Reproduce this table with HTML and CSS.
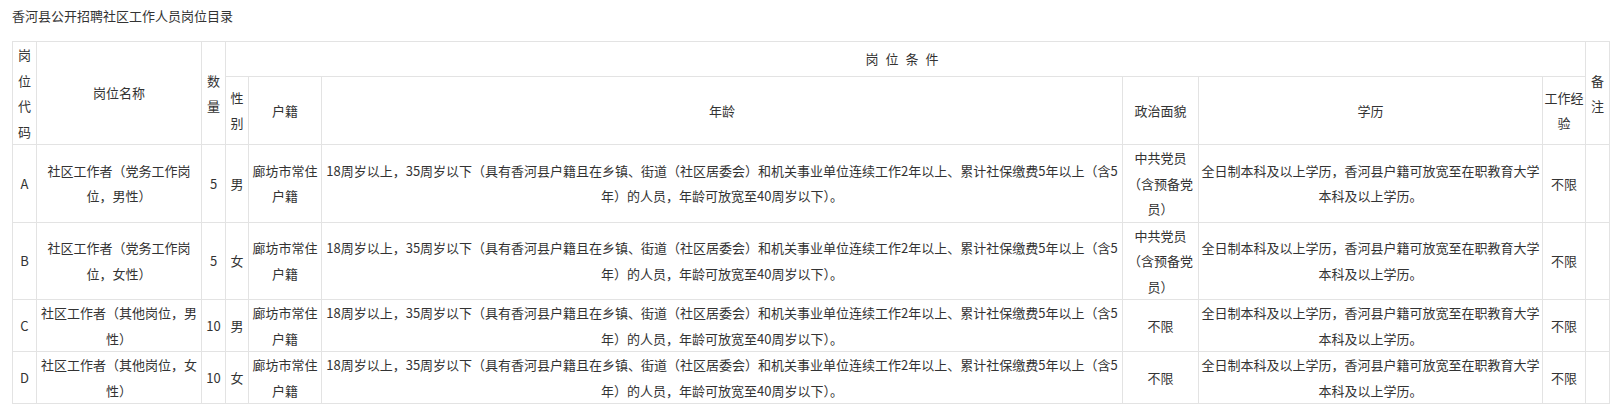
FILE: index.html
```html
<!DOCTYPE html>
<html lang="zh-CN">
<head>
<meta charset="utf-8">
<title>香河县公开招聘社区工作人员岗位目录</title>
<link rel="stylesheet" href="styles.css">
</head>
<body>
<div class="page">
  <p class="title">香河县公开招聘社区工作人员岗位目录</p>
  <table class="jobs">
    <colgroup>
      <col class="c-code">
      <col class="c-name">
      <col class="c-num">
      <col class="c-sex">
      <col class="c-hj">
      <col class="c-age">
      <col class="c-pol">
      <col class="c-edu">
      <col class="c-exp">
      <col class="c-note">
    </colgroup>
    <thead>
      <tr class="h1">
        <th rowspan="2">岗位代码</th>
        <th rowspan="2">岗位名称</th>
        <th rowspan="2">数量</th>
        <th colspan="6" class="spaced">岗位条件</th>
        <th rowspan="2">备注</th>
      </tr>
      <tr class="h2">
        <th>性别</th>
        <th>户籍</th>
        <th>年龄</th>
        <th>政治面貌</th>
        <th>学历</th>
        <th>工作经验</th>
      </tr>
    </thead>
    <tbody>
      <tr>
        <td>A</td>
        <td>社区工作者（党务工作岗位，男性）</td>
        <td>5</td>
        <td>男</td>
        <td>廊坊市常住户籍</td>
        <td>18周岁以上，35周岁以下（具有香河县户籍且在乡镇、街道（社区居委会）和机关事业单位连续工作2年以上、累计社保缴费5年以上（含5年）的人员，年龄可放宽至40周岁以下）。</td>
        <td>中共党员（含预备党员）</td>
        <td>全日制本科及以上学历，香河县户籍可放宽至在职教育大学本科及以上学历。</td>
        <td>不限</td>
        <td></td>
      </tr>
      <tr>
        <td>B</td>
        <td>社区工作者（党务工作岗位，女性）</td>
        <td>5</td>
        <td>女</td>
        <td>廊坊市常住户籍</td>
        <td>18周岁以上，35周岁以下（具有香河县户籍且在乡镇、街道（社区居委会）和机关事业单位连续工作2年以上、累计社保缴费5年以上（含5年）的人员，年龄可放宽至40周岁以下）。</td>
        <td>中共党员（含预备党员）</td>
        <td>全日制本科及以上学历，香河县户籍可放宽至在职教育大学本科及以上学历。</td>
        <td>不限</td>
        <td></td>
      </tr>
      <tr>
        <td>C</td>
        <td>社区工作者（其他岗位，男性）</td>
        <td>10</td>
        <td>男</td>
        <td>廊坊市常住户籍</td>
        <td>18周岁以上，35周岁以下（具有香河县户籍且在乡镇、街道（社区居委会）和机关事业单位连续工作2年以上、累计社保缴费5年以上（含5年）的人员，年龄可放宽至40周岁以下）。</td>
        <td>不限</td>
        <td>全日制本科及以上学历，香河县户籍可放宽至在职教育大学本科及以上学历。</td>
        <td>不限</td>
        <td></td>
      </tr>
      <tr>
        <td>D</td>
        <td>社区工作者（其他岗位，女性）</td>
        <td>10</td>
        <td>女</td>
        <td>廊坊市常住户籍</td>
        <td>18周岁以上，35周岁以下（具有香河县户籍且在乡镇、街道（社区居委会）和机关事业单位连续工作2年以上、累计社保缴费5年以上（含5年）的人员，年龄可放宽至40周岁以下）。</td>
        <td>不限</td>
        <td>全日制本科及以上学历，香河县户籍可放宽至在职教育大学本科及以上学历。</td>
        <td>不限</td>
        <td></td>
      </tr>
    </tbody>
  </table>
</div>
</body>
</html>
```
FILE: styles.css
```css
html, body {
  margin: 0;
  padding: 0;
  background: #ffffff;
}

body {
  font-family: "Noto Sans CJK SC", "Microsoft YaHei", "Liberation Sans", sans-serif;
  font-size: 13px;
  color: #333333;
}

.page {
  padding: 6px 10px 0 12px;
}

.title {
  margin: 0 0 15px 0;
  line-height: 20px;
  font-size: 13px;
  color: #333333;
}

.jobs {
  border-collapse: collapse;
  table-layout: fixed;
  width: 1597px;
}

.jobs th,
.jobs td {
  border: 1px solid #e3e3e3;
  padding: 0;
  text-align: center;
  vertical-align: middle;
  font-weight: normal;
  line-height: 25.5px;
  word-break: normal;
}

.spaced {
  letter-spacing: 7px;
}

.c-code { width: 24px; }
.c-name { width: 165px; }
.c-num  { width: 24px; }
.c-sex  { width: 23px; }
.c-hj   { width: 73px; }
.c-age  { width: 801px; }
.c-pol  { width: 76px; }
.c-edu  { width: 344px; }
.c-exp  { width: 43px; }
.c-note { width: 24px; }
```
